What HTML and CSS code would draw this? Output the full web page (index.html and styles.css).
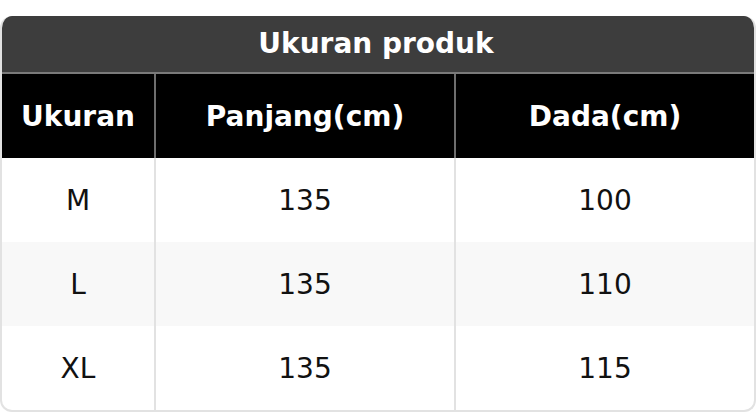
FILE: index.html
```html
<!DOCTYPE html>
<html>
<head>
<meta charset="utf-8">
<link rel="stylesheet" href="styles.css">
</head>
<body>
<div class="card">
  <div class="title">Ukuran produk</div>
  <table class="size-table">
    <colgroup>
      <col class="c1"><col class="c2"><col class="c3">
    </colgroup>
    <thead>
      <tr><th>Ukuran</th><th>Panjang(cm)</th><th>Dada(cm)</th></tr>
    </thead>
    <tbody>
      <tr><td>M</td><td>135</td><td>100</td></tr>
      <tr class="alt"><td>L</td><td>135</td><td>110</td></tr>
      <tr><td>XL</td><td>135</td><td>115</td></tr>
    </tbody>
  </table>
</div>
</body>
</html>
```
FILE: styles.css
```css
html, body {
  margin: 0;
  padding: 0;
  background: #ffffff;
}
body {
  padding-top: 16px;
  font-family: "DejaVu Sans", Verdana, sans-serif;
}
.card {
  width: 756px;
  box-sizing: border-box;
  border: 2px solid #e2e2e2;
  border-top: none;
  border-radius: 12px;
  overflow: hidden;
}
.title {
  background: #3d3d3d;
  color: #ffffff;
  font-weight: bold;
  font-size: 28px;
  height: 56px;
  line-height: 56px;
  text-align: center;
  padding-right: 4px;
  border-bottom: 2px solid #7a7a7a;
}
.size-table {
  width: 100%;
  border-collapse: collapse;
  table-layout: fixed;
}
.c1 { width: 153px; }
.c2 { width: 300px; }
th, td {
  height: 84px;
  padding: 0;
  text-align: center;
  vertical-align: middle;
  font-size: 28px;
}
th {
  background: #000000;
  color: #ffffff;
  font-weight: bold;
  border-left: 2px solid #6e6e6e;
}
td {
  color: #111111;
  border-left: 2px solid #e2e2e2;
}
th:first-child, td:first-child { border-left: none; }
tr.alt td { background: #f8f8f8; }
```
